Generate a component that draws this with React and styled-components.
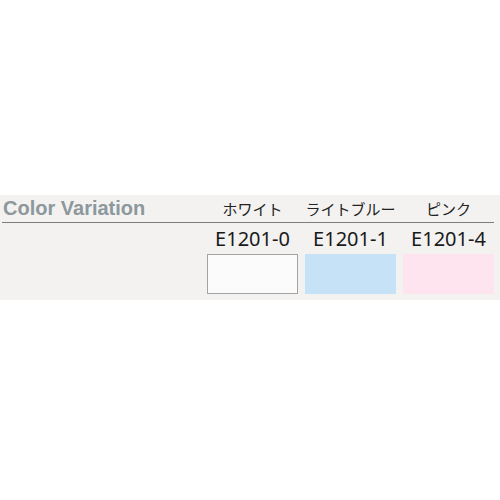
import React from "react";
import styled, { createGlobalStyle } from "styled-components";

const Global = createGlobalStyle`
  html, body { margin: 0; padding: 0; background: #ffffff; }
  body { width: 500px; height: 500px; overflow: hidden; }
`;

const Band = styled.section`
  margin-top: 195px;
  height: 105px;
  background: #f3f2f1;
  display: grid;
  grid-template-columns: 200px 91px 91px 91px;
  grid-template-rows: 27px 1px 31px 40px;
  column-gap: 7px;
  padding-right: 5px;
`;

const Title = styled.h2`
  margin: 0;
  padding-left: 3px;
  font-family: "Liberation Sans", Arial, sans-serif;
  font-weight: bold;
  font-size: 20px;
  line-height: 27px;
  color: #8c989c;
  white-space: nowrap;
`;

const ColorName = styled.div`
  font-family: "Noto Sans CJK JP", sans-serif;
  font-size: 15px;
  line-height: 27px;
  color: #222;
  text-align: center;
  white-space: nowrap;
`;

const Rule = styled.div`
  grid-column: 1 / -1;
  margin-left: 2px;
  background: #7d7d7d;
`;

const Code = styled.div`
  grid-row: 3;
  font-family: "Noto Sans", "Open Sans", sans-serif;
  font-size: 20px;
  line-height: 31px;
  color: #1a1a1a;
  text-align: center;
  white-space: nowrap;
`;

const Swatch = styled.div`
  grid-row: 4;
  height: 40px;
  box-sizing: border-box;
  background: ${(p) => p.$fill};
  border: ${(p) => (p.$bordered ? "1px solid #a3a3a3" : "none")};
`;

const variants = [
  { name: "ホワイト", code: "E1201-0", fill: "#fbfbfb", bordered: true },
  { name: "ライトブルー", code: "E1201-1", fill: "#c6e2f6" },
  { name: "ピンク", code: "E1201-4", fill: "#fde4ee" },
];

export default function App() {
  return (
    <>
      <Global />
      <Band>
        <Title>Color Variation</Title>
        {variants.map((v) => (
          <ColorName key={v.name}>{v.name}</ColorName>
        ))}
        <Rule />
        {variants.map((v, i) => (
          <Code key={v.code} style={{ gridColumn: i + 2 }}>{v.code}</Code>
        ))}
        {variants.map((v, i) => (
          <Swatch
            key={v.code + "s"}
            $fill={v.fill}
            $bordered={v.bordered}
            style={{ gridColumn: i + 2 }}
          />
        ))}
      </Band>
    </>
  );
}
